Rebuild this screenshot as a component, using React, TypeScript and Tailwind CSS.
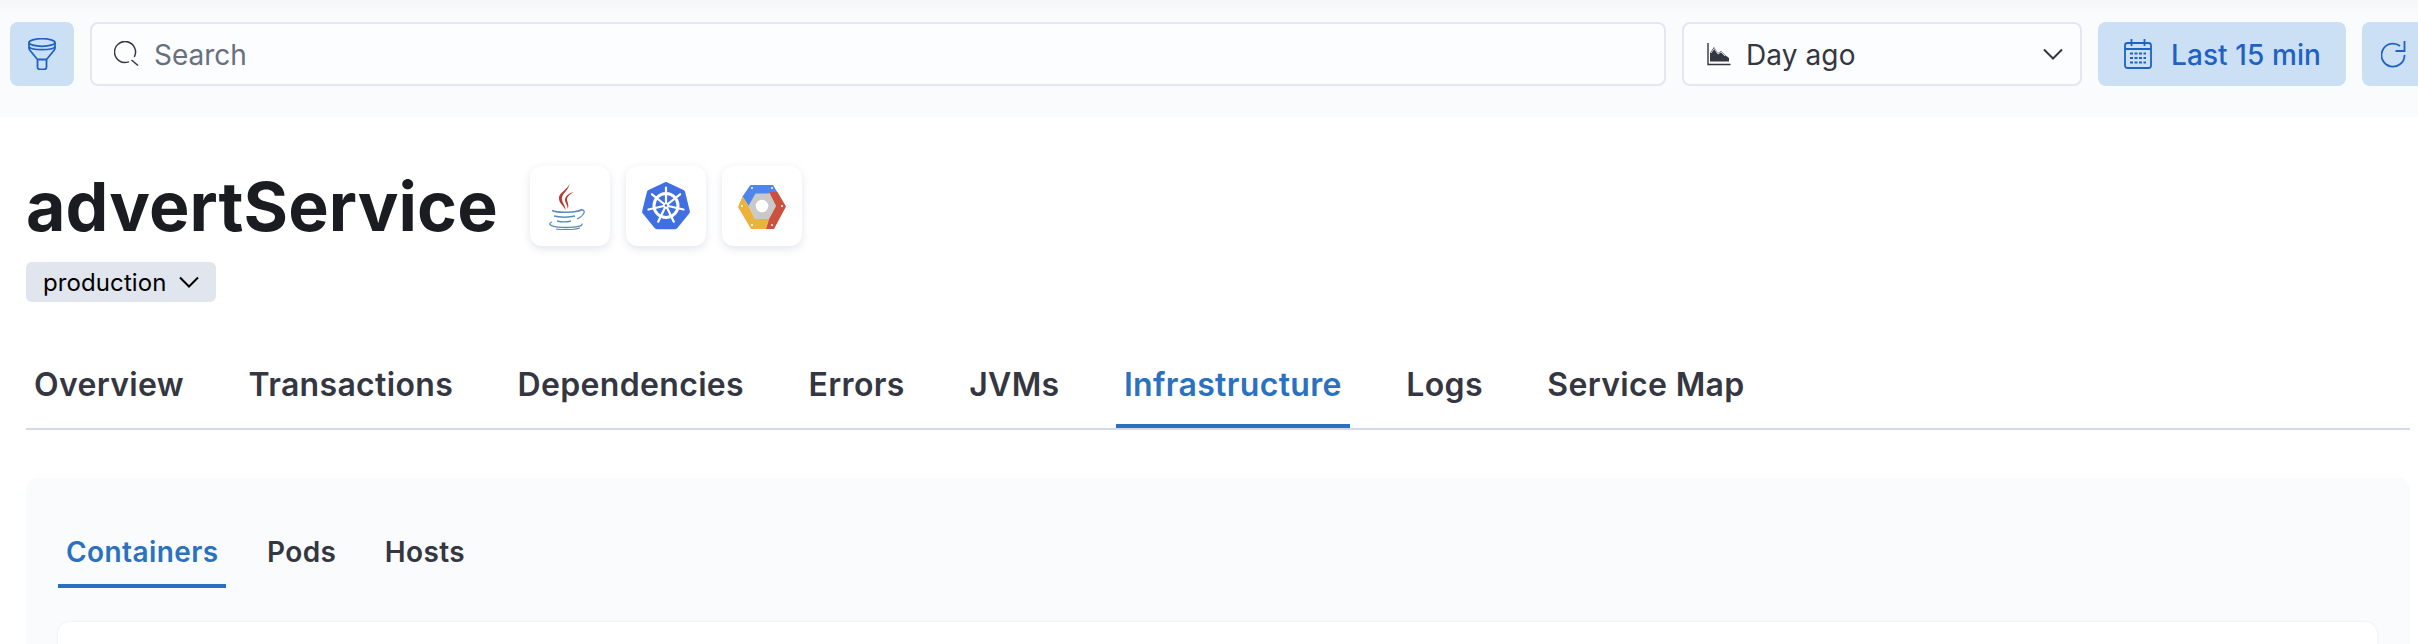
const mainTabs = ["Overview", "Transactions", "Dependencies", "Errors", "JVMs", "Infrastructure", "Logs", "Service Map"];
const subTabs = ["Containers", "Pods", "Hosts"];

function FilterIcon() {
  return (
    <svg width="28" height="32" viewBox="0 0 28 32" fill="none" stroke="#1f62c4" strokeWidth="1.800">
      <ellipse cx="14" cy="4.500" rx="13" ry="3.800" />
      <path d="M1 4.500V10c0 1 .5 2 1.500 3l7 8.500V29c0 1.500 1 2.500 2.500 2.500h4c1.500 0 2.500-1 2.500-2.500v-7.500l7-8.500c1-1 1.500-2 1.500-3V4.500" />
      <path d="M1 9c3 3.500 23 3.500 26 0M9.500 21.500h9" />
    </svg>
  );
}

function SearchIcon() {
  return (
    <svg width="26" height="26" viewBox="0 0 26 26" fill="none" stroke="#343741" strokeWidth="1.500">
      <path d="M14.500 20.900A10.500 10.500 0 1 1 20.500 15.500" strokeLinecap="round" />
      <path d="M17.500 19l6.500 5.500" />
    </svg>
  );
}

function ChartIcon() {
  return (
    <svg width="24" height="24" viewBox="0 0 24 24" fill="none">
      <path d="M1 1v21.500h22.500" stroke="#343741" strokeWidth="1.400" />
      <path d="M3 19.500V11l4-6 4 6 3-2 4 4 4 3v3.500z" fill="#343741" />
      <path d="M4 11l3.200-4.500L11 12l3-2 4 4" stroke="#fff" strokeWidth="0.800" />
    </svg>
  );
}

function CalendarIcon() {
  return (
    <svg width="28" height="30" viewBox="0 0 28 30" fill="none" stroke="#1f62c4" strokeWidth="1.800">
      <rect x="1" y="4" width="26" height="25" rx="2.500" />
      <path d="M1 10h26M7.500 0v7M20.500 0v7" />
      <path d="M6 14.500h16M6 19h16M6 23.500h16" strokeWidth="2.200" strokeDasharray="3 1.500" />
    </svg>
  );
}

function RefreshIcon() {
  return (
    <svg width="26" height="27" viewBox="0 0 26 27" fill="none" stroke="#1f62c4" strokeWidth="1.800">
      <path d="M19 5A11.500 11.500 0 1 0 23.500 14" />
      <path d="M14.500 10H23.500V0" />
    </svg>
  );
}

function Chevron({ size, color }: { size: number; color: string }) {
  return (
    <svg width={size} height={size * 0.6} viewBox="0 0 20 12" fill="none" stroke={color} strokeWidth="2">
      <path d="M1 1.500l9 9 9-9" />
    </svg>
  );
}

function JavaLogo() {
  return (
    <svg width="48" height="48" viewBox="0 0 48 48" fill="none">
      <path d="M23 0C25 6 13 10 13 16 12.800 21 17 23 19.500 28 19.500 23 15 20 16 15 17.500 10 25 6 23 0z" fill="#b8392f" />
      <path d="M28 10C23 11 19 14 19 18 19 21 22 23 21.500 27 23.500 24 21.500 20.500 21 18 20.500 15 24 12 28 10z" fill="#b8392f" />
      <g stroke="#5a8ac0" fill="none">
        <path d="M6 28.500c5 2.500 24 2.500 30-1" strokeWidth="1.500" />
        <path d="M8 34c5 1.500 16 1.500 21 0" strokeWidth="1.500" />
        <path d="M11 39c4 1 10 1 14 0" strokeWidth="1.400" />
        <path d="M35 28c5-1 4.500 5-4 9" strokeWidth="1.300" />
        <path d="M6 40c-7 3 3 5.500 14 5.500s17-1.500 16-4" strokeWidth="1.300" />
        <path d="M10 47c6 1 18 1 24-1" strokeWidth="1.100" />
      </g>
    </svg>
  );
}

function KubernetesLogo() {
  const spokes = [0, 51.4, 102.900, 154.300, 205.700, 257.100, 308.600];
  return (
    <svg width="48" height="48" viewBox="0 0 48 48" fill="none">
      <path d="M22.500.4a3 3 0 0 1 3 0l16 7.700a3 3 0 0 1 1.600 2L47.800 29a3 3 0 0 1-.6 2.500L35.400 46a3 3 0 0 1-2.300 1.200H14.900a3 3 0 0 1-2.300-1.200L.8 31.500a3 3 0 0 1-.6-2.500l4.700-18.900a3 3 0 0 1 1.600-2z" fill="#3f6fe0" />
      <circle cx="24" cy="23.500" r="12" stroke="#fff" strokeWidth="3" />
      <g stroke="#fff" strokeWidth="2.200" strokeLinecap="round">
        {spokes.map((a) => (
          <line key={a} x1="24" y1="23.500" x2="24" y2="5.500" transform={`rotate(${a} 24 23.500)`} />
        ))}
      </g>
      <circle cx="24" cy="23.500" r="3" fill="#fff" />
      <circle cx="24" cy="23.500" r="1.200" fill="#3f6fe0" />
    </svg>
  );
}

function ComputeLogo() {
  return (
    <svg width="48" height="48" viewBox="0 0 48 48" fill="none">
      <path d="M10.500 24l6.500-13.500h14L38 24l-7 13H17z" fill="#c9c9c9" />
      <path d="M13 3h22l4.500 7.500H31.500l-1 1h-13L10.500 24 4.500 14.500l7.500-11z" fill="#4f86ec" strokeLinejoin="round" />
      <path d="M4.500 14.500l6 9.500 6.500 13h14l-3 10H13L0 25z" fill="#ecb33c" />
      <path d="M31 10h8.500L48 24.500 36 47h-8l3-10 7-13z" fill="#cb5040" />
      <circle cx="24" cy="24" r="6.300" fill="#fff" />
      <g fill="#fff">
        <circle cx="14" cy="6" r="1" />
        <circle cx="34" cy="6" r="1" />
        <circle cx="44" cy="24" r="1" />
        <circle cx="4" cy="24" r="1" />
        <circle cx="14" cy="43" r="1" />
        <circle cx="34" cy="43" r="1" />
      </g>
    </svg>
  );
}

function LogoCard({ children }: { children: React.ReactNode }) {
  return (
    <div className="flex h-20 w-20 items-center justify-center rounded-xl bg-white shadow-[0_3px_8px_rgba(60,70,110,0.14)]">
      {children}
    </div>
  );
}

export default function App() {
  return (
    <div className="h-[644px] w-[2418px] overflow-hidden bg-white font-['Inter',sans-serif]">
      {/* top bar */}
      <div className="flex h-[117px] gap-4 bg-[linear-gradient(#f5f6f8,#fafbfd_14px)] pl-[10px] pt-[22px]">
        <button className="flex h-16 w-16 shrink-0 items-center justify-center rounded-lg bg-[#cce0f5]">
          <FilterIcon />
        </button>
        <div className="flex h-16 w-[1576px] shrink-0 items-center rounded-lg border-2 border-[#e4e6f2] bg-[#fcfdfe] pl-[22px]">
          <SearchIcon />
          <span className="ml-[14px] pt-[2px] text-[28px] text-[#69707d]">Search</span>
        </div>
        <div className="flex h-16 w-[400px] shrink-0 items-center rounded-lg border-2 border-[#e4e6f2] bg-[#fcfdfe] pl-[23px] pr-[17px]">
          <ChartIcon />
          <span className="ml-[15px] pt-[2px] text-[28px] tracking-[0.1px] text-[#343741]">Day ago</span>
          <span className="ml-auto">
            <Chevron size={20} color="#343741" />
          </span>
        </div>
        <button className="flex h-16 w-[248px] shrink-0 items-center rounded-lg bg-[#cce0f5] pl-[26px]">
          <CalendarIcon />
          <span className="ml-[19px] pt-[2px] text-[28px] font-medium tracking-[0.1px] text-[#1f62c4]">Last 15 min</span>
        </button>
        <button className="flex h-16 w-16 shrink-0 items-center justify-center rounded-lg bg-[#cce0f5]">
          <RefreshIcon />
        </button>
      </div>

      {/* header */}
      <div className="px-[26px] pt-[49px]">
        <div className="flex h-20 items-center gap-[32px]">
          <h1 className="text-[68px] font-bold leading-none tracking-[0.1px] text-[#1a1c21]">advertService</h1>
          <div className="flex gap-4">
            <LogoCard>
              <JavaLogo />
            </LogoCard>
            <LogoCard>
              <KubernetesLogo />
            </LogoCard>
            <LogoCard>
              <ComputeLogo />
            </LogoCard>
          </div>
        </div>
        <div className="mt-4 flex h-10 w-[190px] items-center gap-3 rounded-md bg-[#e0e5ee] pl-[17px]">
          <span className="pt-[2px] text-2xl tracking-[0.1px] text-black">production</span>
          <Chevron size={20} color="#000" />
        </div>

        {/* main tabs */}
        <div className="mt-[30px] flex h-[98px] w-[2384px] gap-[48.5px] border-b-2 border-[#d5d9e8]">
          {mainTabs.map((t) => (
            <div
              key={t}
              className={
                t === "Infrastructure"
                  ? "flex items-center border-b-4 border-[#2a72c0] px-2 pt-[14px] text-[32px] font-semibold tracking-[0.33px] text-[#2a72c0]"
                  : "flex items-center border-b-4 border-transparent px-2 pt-[14px] text-[32px] font-semibold tracking-[0.33px] text-[#343741]"
              }
            >
              {t}
            </div>
          ))}
        </div>
      </div>

      {/* panel */}
      <div className="mx-[26px] mt-12 h-[300px] w-[2384px] rounded-xl bg-[#fafbfd] pl-8 pr-[33px]">
        <div className="flex h-[110px] gap-[32.5px]">
          {subTabs.map((t) => (
            <div
              key={t}
              className={
                t === "Containers"
                  ? "flex items-center border-b-4 border-[#2a72c0] px-2 pt-[42px] text-[28px] font-semibold tracking-[0.4px] text-[#2a72c0]"
                  : "flex items-center border-b-4 border-transparent px-2 pt-[42px] text-[28px] font-semibold tracking-[0.4px] text-[#343741]"
              }
            >
              {t}
            </div>
          ))}
        </div>
        <div className="mt-[34px] h-[200px] rounded-xl bg-white shadow-[0_0_3px_rgba(60,70,110,0.08)]" />
      </div>
    </div>
  );
}
